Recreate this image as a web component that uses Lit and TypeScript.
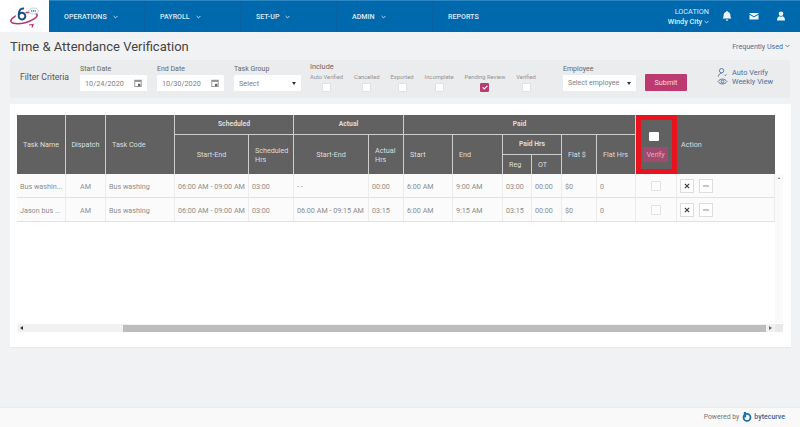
import { LitElement, html, css, svg } from "lit";
import { customElement } from "lit/decorators.js";

const COLS = [49, 40, 69, 74, 45, 75, 35, 49, 50, 29, 30, 35, 39, 41, 98];

const ROWS = [
  ["Bus washin...", "AM", "Bus washing", "06:00 AM - 09:00 AM", "03:00", "- -", "00:00", "6:00 AM", "9:00 AM", "03:00", "00:00", "$0", "0"],
  ["Jason bus ...", "AM", "Bus washing", "06:00 AM - 09:00 AM", "03:00", "06:00 AM - 09:15 AM", "03:15", "6:00 AM", "9:15 AM", "03:15", "00:00", "$0", "0"],
];

const calendar = svg`<svg class="cal" viewBox="0 0 10 10"><rect x="1" y="1.5" width="8" height="8" fill="none" stroke="#888" stroke-width="1"/><rect x="1" y="1.5" width="8" height="2" fill="#888"/><rect x="5" y="6" width="3" height="3" fill="#666"/></svg>`;

@customElement("app-root")
export class AppRoot extends LitElement {
  static styles = css`
    :host { display: flex; flex-direction: column; width: 800px; height: 427px; background: #f1f2f4; font-family: Roboto, "Liberation Sans", sans-serif; color: #666; overflow: hidden; }
    * { box-sizing: border-box; }
    .topbar, .titlebar, .filters, .card, .footer { opacity: .999; }
    .topbar { display: flex; height: 32px; flex: none; background: #0069ae; border-top: 1px solid #2b86c2; color: #dfecf6; }
    .logo { width: 49px; margin-top: -1px; height: 32px; background: #fff; display: flex; align-items: center; justify-content: center; }
    .nav { display: flex; flex: 1; }
    .nav-item { width: 96px; padding-left: 15px; display: flex; align-items: center; gap: 6px; font-size: 7.1px; font-weight: 500; border-right: 1px solid #0a62a0; }
    .nav-item.last { border-right: 0; }
    .nav-item svg { width: 5px; height: 4px; }
    .loc { margin-left: auto; text-align: right; font-size: 7.3px; line-height: 9.5px; align-self: center; }
    .loc b { font-weight: 500; display: block; }
    .loc svg { width: 5px; height: 4px; }
    .icons { display: flex; gap: 17px; align-items: center; padding: 0 14px 2px 13px; }
    .icons svg { width: 10px; height: 10px; fill: #eef5fa; display: block; }
    .titlebar { display: flex; justify-content: space-between; align-items: center; height: 28px; padding: 0 10px; flex: none; }
    h1 { margin: 0; font-size: 13px; font-weight: 400; color: #444; }
    .freq { font-size: 7.1px; color: #4a6f9a; display: flex; gap: 2px; align-items: center; }
    .freq svg { width: 5px; height: 4px; }
    .filters { margin: 0 10px; height: 38px; flex: none; background: #ebecee; display: flex; }
    .fc { width: 70px; padding-left: 10px; font-size: 8.6px; line-height: 34px; color: #555; white-space: nowrap; }
    .field { margin-right: 10px; padding-top: 4px; width: 67px; flex: none; }
    .field label { display: block; font-size: 7px; line-height: 10px; color: #666; height: 11px; }
    .box { height: 16px; background: #fff; display: flex; align-items: center; justify-content: space-between; padding: 0 5px; font-size: 7.3px; color: #808080; }
    .cal { width: 8px; height: 8px; }
    .caret { width: 0; height: 0; border-left: 2px solid transparent; border-right: 2px solid transparent; border-top: 3px solid #333; }
    .include { width: 242px; margin-left: -1px; padding-top: 2px; margin-right: 11px; flex: none; }
    .include > label { font-size: 7.3px; line-height: 10px; display: block; color: #666; }
    .checks { display: flex; gap: 11px; margin-top: 1px; }
    .chk { display: flex; flex-direction: column; align-items: center; font-size: 5.8px; line-height: 8px; color: #929292; white-space: nowrap; gap: 2px; }
    .cb { width: 9px; height: 9px; background: #fff; border: 1px solid #e2e2e2; border-radius: 1px; display: block; }
    .cb.on { background: #b93a6c; border-color: #b93a6c; display: flex; align-items: center; justify-content: center; }
    .cb.on svg { width: 6px; height: 5px; }
    .emp { width: 73px; margin-right: 9px; }
    .emp .box { font-size: 7px; }
    .submit { margin-top: 14px; width: 42px; height: 17px; background: #bd3a70; color: #f4dbe6; font-size: 7.3px; display: flex; align-items: center; justify-content: center; border-radius: 1px; }
    .links { margin-left: 30px; padding-top: 8px; display: flex; flex-direction: column; font-size: 7.4px; color: #4a6f9a; line-height: 9px; }
    .links div { display: flex; align-items: center; gap: 4px; }
    .links svg { width: 11px; height: 9px; fill: none; stroke: #4a6f9a; stroke-width: 1; }
    .card { margin: 6px 9px 0 10px; height: 244px; flex: none; background: #fff; padding: 11px 7px 0; border-bottom: 1px solid #e9e9e9; }
    .grid { display: grid; grid-template-columns: 758px 8px; grid-template-rows: 208px 9px; }
    .tablewrap { overflow: hidden; }
    table { border-collapse: separate; border-spacing: 0; table-layout: fixed; width: 758px; font-size: 7.2px; }
    th { background: #616161; color: #dedede; font-weight: 400; text-align: left; padding: 0 6px; border-right: 1px solid #cfcfcf; height: 19px; line-height: 9px; }
    th.nw { white-space: nowrap; }
    th.c { text-align: center; padding: 0; }
    th.b { font-weight: 700; font-size: 6.8px; text-align: center; padding: 0; border-bottom: 1px solid #cfcfcf; height: 20px; }
    th.bare { border-right: 0; padding-left: 4px; }
    th.verify { border: 5px solid #e8131f; padding: 0; text-align: left; height: 59px; vertical-align: top; }
    .vbox { display: block; width: 10px; height: 9px; background: #fff; margin: 12px 0 6px 8px; border-radius: 1px; }
    .vlabel { display: block; width: 25px; margin-left: 2px; background: #a04a70; color: #e3aec5; font-size: 7.2px; line-height: 15px; text-align: center; }
    td { height: 24px; padding: 1px 3px 0; color: #8c8c8c; border-right: 1px solid #ececec; border-bottom: 1px solid #e2e2e2; background: #fbfbfb; white-space: nowrap; overflow: hidden; }
    td.c { text-align: center; }
    .acts { display: flex; gap: 5px; }
    .act { width: 14px; height: 14px; border: 1px solid #ddd; background: #fff; display: flex; align-items: center; justify-content: center; }
    .act svg { width: 6px; height: 6px; }
    .cb.row { margin: 0 auto; width: 10px; height: 10px; }
    .vtrack { background: #fafafa; margin-top: 59px; height: 149px; display: flex; justify-content: center; padding-top: 3px; }
    .arrow-u { width: 0; height: 0; border-left: 1.5px solid transparent; border-right: 1.5px solid transparent; border-bottom: 2px solid #777; }
    .htrack { background: #f1f1f1; display: flex; align-items: center; margin-top: 1px; height: 8px; padding: 0 3px; }
    .arrow-l { width: 0; height: 0; border-top: 2px solid transparent; border-bottom: 2px solid transparent; border-right: 3px solid #333; }
    .arrow-r { width: 0; height: 0; border-top: 2px solid transparent; border-bottom: 2px solid transparent; border-left: 3px solid #666; }
    .thumb { height: 7px; background: #bcbcbc; margin-left: 100px; margin-right: 3px; flex: 1; }
    .corner { background: #e9e9e9; height: 8px; margin-top: 1px; }
    .footer { margin-top: auto; height: 20px; flex: none; background: #f9f9f9; border-top: 1px solid #ececec; display: flex; align-items: center; justify-content: flex-end; gap: 2px; padding: 0 15px 2px 0; font-size: 6.9px; color: #777; }
    .brand { font-size: 7px; font-weight: 500; color: #3b5f96; }
    .footer svg { width: 10px; height: 11px; margin-left: 1px; }
  `;

  private chevron(color = "#dfecf6") {
    return html`<svg viewBox="0 0 6 4"><path d="M.7.8 3 3.100 5.300.8" fill="none" stroke=${color} stroke-width="1"/></svg>`;
  }

  private logo() {
    return html`<svg width="34" height="26" viewBox="0 0 34 26">
      <ellipse cx="16" cy="15" rx="13.500" ry="4.800" transform="rotate(-14 16 15)" fill="none" stroke="#b5366f" stroke-width="1.500"/>
      <path d="M21 22l4-.5-1 3" fill="none" stroke="#b5366f" stroke-width="1.200"/>
      <circle cx="13.500" cy="13.500" r="5.800" fill="#fff"/>
      <path d="M16 5.500c-3-.5-5.300 1.300-5.300 7.500a3.300 3.300 0 1 0 3.300-3.200c-1.300 0-2.400.7-3 1.700" fill="none" stroke="#15508f" stroke-width="2"/>
      <ellipse cx="25.500" cy="8" rx="5" ry="3" fill="#fff" stroke="#a9c5de" stroke-width=".8"/>
      <path d="M23 8h5" stroke="#4a84bb" stroke-width="1.400" stroke-dasharray="1.300 .55"/>
    </svg>`;
  }

  private check(name: string, on = false) {
    return html`<div class="chk">${name}<span class="cb ${on ? "on" : ""}">${on
      ? html`<svg viewBox="0 0 6 5"><path d="M.6 2.400 2.300 4 5.400.8" fill="none" stroke="#fff" stroke-width="1.200"/></svg>`
      : ""}</span></div>`;
  }

  private row(r: string[]) {
    return html`<tr>
      ${r.map((v, i) => html`<td class=${i === 1 ? "c" : ""}>${v}</td>`)}
      <td class="c"><span class="cb row"></span></td>
      <td><div class="acts">
        <span class="act"><svg viewBox="0 0 7 7"><path d="M1 1l5 5M6 1 1 6" stroke="#444" stroke-width="1.500"/></svg></span>
        <span class="act"><svg viewBox="0 0 7 7"><path d="M0 3.500h7" stroke="#777" stroke-width="1"/></svg></span>
      </div></td>
    </tr>`;
  }

  render() {
    return html`
      <div class="topbar">
        <div class="logo">${this.logo()}</div>
        <div class="nav">
          <div class="nav-item">OPERATIONS ${this.chevron()}</div>
          <div class="nav-item">PAYROLL ${this.chevron()}</div>
          <div class="nav-item">SET-UP ${this.chevron()}</div>
          <div class="nav-item">ADMIN ${this.chevron()}</div>
          <div class="nav-item last">REPORTS</div>
        </div>
        <div class="loc">LOCATION<b>Windy City ${this.chevron()}</b></div>
        <div class="icons">
          <svg viewBox="0 0 10 10"><path d="M5 0a1 1 0 0 1 1 1c2 .5 2.400 2.200 2.400 3.600 0 1.600.6 2.400 1.100 3H.5c.5-.6 1.100-1.400 1.100-3C1.600 3.200 2 1.500 4 1a1 1 0 0 1 1-1zM3.800 8.500h2.400a1.200 1.200 0 0 1-2.400 0z"/></svg>
          <svg viewBox="0 0 10 10"><path d="M.5 2h9v.8L5 5.300.5 2.800zM.5 3.800 5 6.300l4.500-2.500V8.500h-9z"/></svg>
          <svg viewBox="0 0 10 10"><circle cx="5" cy="2.800" r="2.300"/><path d="M1 9.500c0-2.600 1-4 2.500-4.200.9.600 2.100.6 3 0C8 5.500 9 6.900 9 9.500z"/></svg>
        </div>
      </div>

      <div class="titlebar">
        <h1>Time &amp; Attendance Verification</h1>
        <span class="freq">Frequently Used ${this.chevron("#4a6f9a")}</span>
      </div>

      <div class="filters">
        <div class="fc">Filter Criteria</div>
        <div class="field"><label>Start Date</label><div class="box">10/24/2020 ${calendar}</div></div>
        <div class="field"><label>End Date</label><div class="box">10/30/2020 ${calendar}</div></div>
        <div class="field"><label>Task Group</label><div class="box">Select <span class="caret"></span></div></div>
        <div class="include">
          <label>Include</label>
          <div class="checks">
            ${this.check("Auto Verified")}${this.check("Cancelled")}${this.check("Exported")}${this.check("Incomplete")}${this.check("Pending Review", true)}${this.check("Verified")}
          </div>
        </div>
        <div class="field emp"><label>Employee</label><div class="box">Select employee <span class="caret"></span></div></div>
        <div class="submit">Submit</div>
        <div class="links">
          <div><svg viewBox="0 0 11 10"><circle cx="4.500" cy="3" r="2.400"/><path d="M.8 9.500c.3-2.300 1.800-3.500 3.700-3.500M7.500 7.500l1 1 1.500-1.500"/></svg>Auto Verify</div>
          <div><svg viewBox="0 0 11 10"><path d="M.5 5C2 3 3.700 2.300 5.500 2.300S9 3 10.500 5C9 7 7.300 7.700 5.500 7.700S2 7 .5 5z"/><circle cx="5.500" cy="5" r="1.600"/></svg>Weekly View</div>
        </div>
      </div>

      <div class="card">
        <div class="grid">
          <div class="tablewrap">
            <table>
              <colgroup>${COLS.map((w) => html`<col style="width:${w}px" />`)}</colgroup>
              <thead>
                <tr>
                  <th rowspan="3" class="nw">Task Name</th>
                  <th rowspan="3" class="c">Dispatch</th>
                  <th rowspan="3">Task Code</th>
                  <th colspan="2" class="b">Scheduled</th>
                  <th colspan="2" class="b">Actual</th>
                  <th colspan="6" class="b">Paid</th>
                  <th rowspan="3" class="verify"><span class="vbox"></span><span class="vlabel">Verify</span></th>
                  <th rowspan="3" class="bare">Action</th>
                </tr>
                <tr>
                  <th rowspan="2" class="c">Start-End</th>
                  <th rowspan="2">Scheduled Hrs</th>
                  <th rowspan="2" class="c">Start-End</th>
                  <th rowspan="2">Actual Hrs</th>
                  <th rowspan="2">Start</th>
                  <th rowspan="2">End</th>
                  <th colspan="2" class="b">Paid Hrs</th>
                  <th rowspan="2">Flat $</th>
                  <th rowspan="2">Flat Hrs</th>
                </tr>
                <tr><th>Reg</th><th>OT</th></tr>
              </thead>
              <tbody>${ROWS.map((r) => this.row(r))}</tbody>
            </table>
          </div>
          <div class="vtrack"><span class="arrow-u"></span></div>
          <div class="htrack"><span class="arrow-l"></span><span class="thumb"></span><span class="arrow-r"></span></div>
          <div class="corner"></div>
        </div>
      </div>

      <div class="footer">
        Powered by
        <svg viewBox="0 0 11 12"><circle cx="5.500" cy="7" r="3.800" fill="none" stroke="#1d6fb0" stroke-width="2"/><path d="M2 1h2.500v6H2z" fill="#1d6fb0"/></svg>
        <span class="brand">bytecurve</span>
      </div>
    `;
  }
}
